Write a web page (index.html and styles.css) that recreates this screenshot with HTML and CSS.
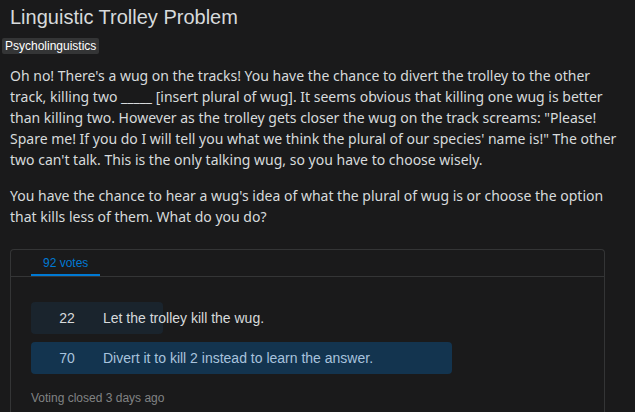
FILE: index.html
```html
<!DOCTYPE html>
<html>
<head>
<meta charset="utf-8">
<link rel="stylesheet" href="styles.css">
</head>
<body>
<h1 class="title">Linguistic Trolley Problem</h1>
<div class="tags"><span class="tag">Psycholinguistics</span></div>
<div class="body">
<p>Oh no! There's a wug on the tracks! You have the chance to divert the trolley to the other track, killing two _____ [insert plural of wug]. It seems obvious that killing one wug is better than killing two. However as the trolley gets closer the wug on the track screams: "Please! Spare me! If you do I will tell you what we think the plural of our species' name is!" The other two can't talk. This is the only talking wug, so you have to choose wisely.</p>
<p>You have the chance to hear a wug's idea of what the plural of wug is or choose the option that kills less of them. What do you do?</p>
</div>
<div class="poll">
  <div class="poll-tabs"><span class="tab">92 votes</span></div>
  <div class="poll-body">
    <div class="option">
      <div class="bar bar-lose" style="width:23.9%"></div>
      <span class="count">22</span><span class="label">Let the trolley kill the wug.</span>
    </div>
    <div class="option win">
      <div class="bar bar-win" style="width:76.1%"></div>
      <span class="count">70</span><span class="label">Divert it to kill 2 instead to learn the answer.</span>
    </div>
    <div class="footer">Voting closed 3 days ago</div>
  </div>
</div>
</body>
</html>
```
FILE: styles.css
```css
html, body {
  margin: 0;
  padding: 0;
  background: #1a1a1b;
}
body {
  height: 412px;
  overflow: hidden;
}
.title {
  margin: 0;
  padding: 5px 0 0 10px;
  font-family: "Liberation Sans", Arial, sans-serif;
  font-weight: normal;
  font-size: 20px;
  line-height: 24px;
  color: #d7dadc;
}
.tags {
  padding: 7px 0 0 2px;
  height: 16px;
}
.tag {
  display: inline-block;
  background: #343536;
  color: #ffffff;
  font-family: "Liberation Sans", Arial, sans-serif;
  font-size: 12px;
  line-height: 16px;
  padding: 0 3px;
  border-radius: 2px;
}
.body {
  padding: 13px 12px 0 10px;
  font-family: "Noto Sans", sans-serif;
  font-size: 14px;
  line-height: 21px;
  color: #d7dadc;
}
.body p {
  margin: 0 0 15px 0;
}
.body p:last-child {
  margin-bottom: 0;
}
.poll {
  margin: 22px 0 0 10px;
  width: 593px;
  border: 1px solid #343536;
  border-bottom: none;
  border-radius: 4px 4px 0 0;
  font-family: "Liberation Sans", Arial, sans-serif;
  height: 200px;
}
.poll-tabs {
  height: 26px;
  border-bottom: 1px solid #343536;
  padding-left: 20px;
  display: flex;
  align-items: flex-end;
}
.tab {
  display: block;
  color: #0079d3;
  font-size: 12px;
  line-height: 16px;
  padding: 0 12px 3px 12px;
  border-bottom: 2px solid #0079d3;
}
.poll-body {
  padding: 25px 20px 0 20px;
}
.option {
  position: relative;
  height: 32px;
  margin-bottom: 8px;
  display: flex;
  align-items: center;
  font-size: 14px;
  color: #d7dadc;
}
.bar {
  position: absolute;
  left: 0;
  top: 0;
  bottom: 0;
  border-radius: 4px;
}
.bar-lose { background: #1a242d; }
.bar-win { background: #13344f; }
.count {
  position: relative;
  width: 72px;
  text-align: center;
}
.label {
  position: relative;
}
.win .count, .win .label {
  color: #a8c3dd;
}
.footer {
  padding-top: 9px;
  font-size: 12px;
  color: #818384;
}
```
